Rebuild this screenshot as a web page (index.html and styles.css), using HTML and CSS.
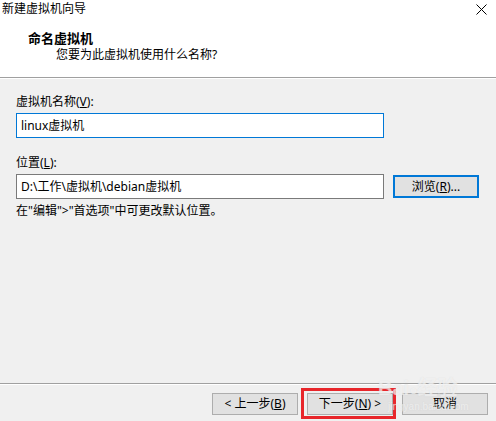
FILE: index.html
```html
<!DOCTYPE html>
<html lang="zh-CN">
<head>
<meta charset="utf-8">
<title>新建虚拟机向导</title>
<link rel="stylesheet" href="styles.css">
</head>
<body>
<div class="window">
  <div class="header">
    <div class="titlebar">
      <span class="title">新建虚拟机向导</span>
      <svg class="close" width="11" height="11" viewBox="0 0 11 11"><path d="M0.5 0.5L10.5 10.5M10.5 0.5L0.5 10.5" stroke="#000" stroke-width="1"/></svg>
    </div>
    <div class="heading">命名虚拟机</div>
    <div class="subheading">您要为此虚拟机使用什么名称?</div>
  </div>
  <div class="content">
    <div class="label label-name">虚拟机名称(<u>V</u>):</div>
    <div class="input focused">linux虚拟机</div>
    <div class="label label-loc">位置(<u>L</u>):</div>
    <div class="row">
      <div class="input">D:\工作\虚拟机\debian虚拟机</div>
      <div class="btn btn-browse">浏览(<u>R</u>)...</div>
    </div>
    <div class="hint">在"编辑"&gt;"首选项"中可更改默认位置。</div>
  </div>
  <div class="footer">
    <div class="btn">&lt; 上一步(<u>B</u>)</div>
    <div class="btn btn-next">下一步(<u>N</u>) &gt;<span class="highlight"></span></div>
    <div class="btn">取消</div>
    <div class="watermark"><span class="wm-big">Bai<span class="paw">●</span>经验</span><span class="wm-small">jingyan.baidu.com</span></div>
  </div>
</div>
</body>
</html>
```
FILE: styles.css
```css
html, body {
  margin: 0;
  padding: 0;
}
body {
  font-family: "Noto Sans", "Noto Sans CJK SC", sans-serif;
  font-size: 12px;
  color: #000;
  background: #f0f0f0;
}
.window {
  width: 496px;
  height: 421px;
  display: flex;
  flex-direction: column;
  background: #f0f0f0;
  position: relative;
  overflow: hidden;
}
.header {
  background: #fff;
  border-bottom: 1px solid #a0a0a0;
  box-sizing: border-box;
  height: 78px;
}
.titlebar {
  display: flex;
  justify-content: space-between;
  align-items: center;
  height: 16px;
  padding: 1px 9px 0 2px;
}
.title {
  line-height: 16px;
}
.close {
  display: block;
}
.heading {
  font-weight: bold;
  font-size: 13px;
  line-height: 16px;
  padding-left: 28px;
  margin-top: 13px;
}
.subheading {
  line-height: 16px;
  padding-left: 56px;
  margin-top: 1px;
}
.content {
  border-top: 1px solid #fff;
  padding: 0 16px;
  flex: 1;
}
.label {
  line-height: 16px;
}
.label-name {
  margin-top: 15px;
}
.label-loc {
  margin-top: 17px;
}
.input {
  box-sizing: border-box;
  width: 368px;
  height: 25px;
  background: #fff;
  border: 1px solid #7a7a7a;
  line-height: 23px;
  padding-left: 4px;
  margin-top: 3px;
}
.input.focused {
  border-color: #0078d7;
}
.row {
  display: flex;
  align-items: center;
  gap: 9px;
  margin-top: 3px;
}
.row .input {
  margin-top: 0;
}
.btn {
  box-sizing: border-box;
  width: 86px;
  height: 22px;
  background: #e1e1e1;
  border: 1px solid #adadad;
  text-align: center;
  line-height: 20px;
  position: relative;
}
.btn-browse {
  border: 2px solid #0078d7;
  height: 23px;
  line-height: 19px;
}
.hint {
  line-height: 16px;
  margin-top: 4px;
}
.footer {
  border-top: 1px solid #a0a0a0;
  box-shadow: inset 0 1px 0 #fff;
  height: 38px;
  display: flex;
  justify-content: flex-end;
  align-items: flex-start;
  gap: 9px;
  padding: 9px 8px 0 0;
  box-sizing: border-box;
  position: relative;
}
.highlight {
  position: absolute;
  left: -7px;
  top: -6px;
  width: 95px;
  height: 31px;
  border: 3px solid #e8262b;
  box-sizing: border-box;
}
.watermark {
  position: absolute;
  left: 378px;
  top: -7px;
  display: flex;
  flex-direction: column;
  color: rgba(255,255,255,0.55);
  pointer-events: none;
  text-shadow: 0 0 1px rgba(200,200,200,0.5);
}
.wm-big {
  font-family: "Liberation Sans", "Noto Sans CJK SC", sans-serif;
  font-size: 20px;
  font-weight: bold;
  line-height: 22px;
}
.paw {
  font-size: 14px;
}
.wm-small {
  font-family: "Liberation Sans", sans-serif;
  font-size: 10px;
  line-height: 12px;
  padding-left: 10px;
}
```
